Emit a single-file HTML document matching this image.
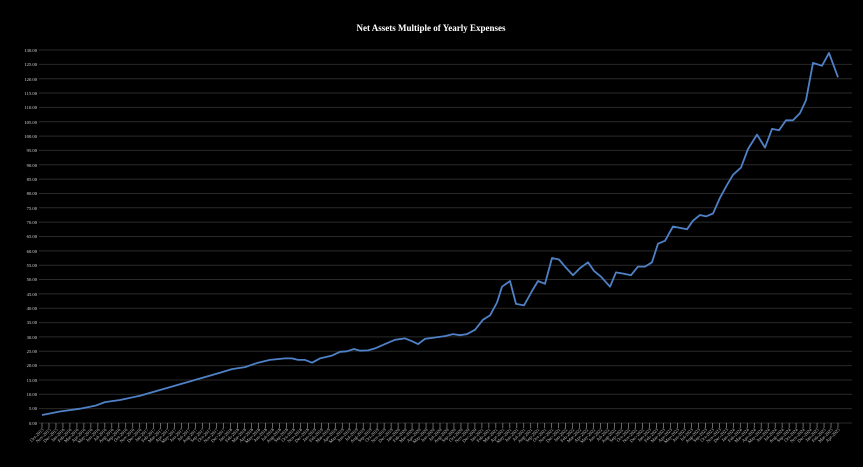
<!DOCTYPE html>
<html><head><meta charset="utf-8"><style>
html,body{margin:0;padding:0;background:#000;}
svg{display:block}
</style></head><body>
<svg id="s" width="863" height="467" xmlns="http://www.w3.org/2000/svg" font-family="Liberation Serif, serif">
<rect width="863" height="467" fill="#000"/>
<text x="431" y="31" fill="#fff" font-size="9" font-weight="bold" text-anchor="middle">Net Assets Multiple of Yearly Expenses</text>
<g id="grid" stroke="#2a2a2a" stroke-width="1"></g>
<g id="yl" fill="#d8d8d8" font-size="4.6" text-anchor="end">
<text x="37" y="52">130.00</text><text x="37" y="66">125.00</text><text x="37" y="81">120.00</text><text x="37" y="95">115.00</text><text x="37" y="109">110.00</text><text x="37" y="124">105.00</text><text x="37" y="138">100.00</text><text x="37" y="152">95.00</text><text x="37" y="167">90.00</text><text x="37" y="181">85.00</text><text x="37" y="195">80.00</text><text x="37" y="210">75.00</text><text x="37" y="224">70.00</text><text x="37" y="238">65.00</text><text x="37" y="253">60.00</text><text x="37" y="267">55.00</text><text x="37" y="281">50.00</text><text x="37" y="296">45.00</text><text x="37" y="310">40.00</text><text x="37" y="324">35.00</text><text x="37" y="339">30.00</text><text x="37" y="353">25.00</text><text x="37" y="367">20.00</text><text x="37" y="382">15.00</text><text x="37" y="396">10.00</text><text x="37" y="410">5.00</text><text x="37" y="425">0.00</text>
</g>
<g id="xt" stroke="#aaa" stroke-width="0.6"></g>
<g id="xl" fill="#ccc" font-size="4.6"></g>
<polyline id="ln" fill="none" stroke="#4f81c7" stroke-width="1.8" stroke-linejoin="round"/>
</svg>
<script>
var g=document.getElementById('grid'),ns='http://www.w3.org/2000/svg';
for(var i=0;i<=26;i++){var y=423-i*14.346;var l=document.createElementNS(ns,'line');l.setAttribute('x1',39);l.setAttribute('x2',852);l.setAttribute('y1',y);l.setAttribute('y2',y);g.appendChild(l);}
var d=[[42,2.8],[60,4],[80,5],[95,6],[105,7.3],[120,8],[140,9.5],[160,11.5],[180,13.5],[200,15.5],[220,17.5],[232,18.8],[245,19.5],[258,21],[270,22],[285,22.5],[292,22.5],[298,22],[305,22],[312,21],[320,22.5],[332,23.5],[340,24.8],[347,25],[354,25.8],[360,25.2],[368,25.3],[375,26],[385,27.5],[395,29],[405,29.5],[412,28.5],[418,27.5],[425,29.3],[435,29.8],[445,30.3],[453,31],[460,30.6],[467,31],[475,32.5],[483,36],[490,37.5],[497,42],[502,47.5],[510,49.5],[516,41.5],[524,41],[532,46],[538,49.5],[545,48.5],[552,57.5],[559,57],[565,54.5],[573,51.5],[580,54],[588,56],[594,53],[601,51],[610,47.5],[616,52.5],[624,52],[631,51.5],[638,54.5],[645,54.5],[652,56],[658,62.5],[665,63.5],[673,68.5],[680,68],[687,67.5],[693,70.5],[700,72.5],[706,72],[713,73],[720,78.5],[727,83],[733,86.5],[741,89],[748,95.5],[757,100.5],[765,96],[772,102.5],[779,102],[786,105.5],[793,105.5],[800,108],[806,112.5],[813,125.5],[822,124.5],[829,129],[838,120.5]];
document.getElementById('ln').setAttribute('points',d.map(function(p){return p[0]+','+(423-p[1]*2.8692).toFixed(1)}).join(' '));
var m=['Jan','Feb','Mar','Apr','May','Jun','Jul','Aug','Sep','Oct','Nov','Dec'];
var xt=document.getElementById('xt'),xl=document.getElementById('xl');
var n=115,mi=9,yr=2015;
for(var k=0;k<n;k++){var x=42+k*(796/(n-1));
var t=document.createElementNS(ns,'line');t.setAttribute('x1',x);t.setAttribute('x2',x);t.setAttribute('y1',423);t.setAttribute('y2',428);xt.appendChild(t);
var tx=document.createElementNS(ns,'text');tx.setAttribute('transform','translate('+(x+2)+',430) rotate(-45)');tx.setAttribute('text-anchor','end');tx.textContent=m[mi]+'-'+yr;xl.appendChild(tx);
mi++;if(mi>11){mi=0;yr++;}}
</script>
</body></html>
